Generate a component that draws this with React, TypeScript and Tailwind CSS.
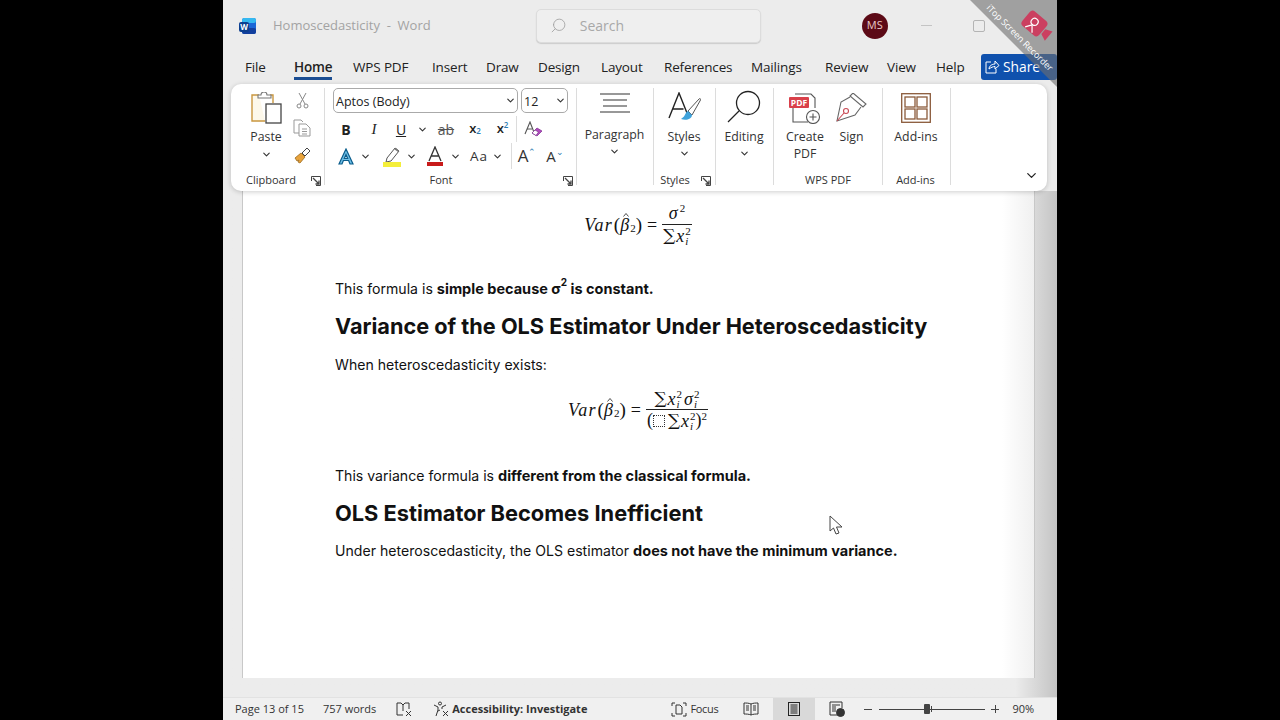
import { ChevronDown, Search } from 'lucide-react'
import type { ReactNode } from 'react'

const ui = "font-['Open_Sans','Noto_Sans',sans-serif]"
const doc = "font-['Inter',sans-serif]"

const tabs = [
  { name: 'File', w: 'w-[49px]' },
  { name: 'Home', w: 'w-[59px]', on: true },
  { name: 'WPS PDF', w: 'w-[79px]' },
  { name: 'Insert', w: 'w-[54px]' },
  { name: 'Draw', w: 'w-[52px]' },
  { name: 'Design', w: 'w-[63px]' },
  { name: 'Layout', w: 'w-[63px]' },
  { name: 'References', w: 'w-[87px]' },
  { name: 'Mailings', w: 'w-[74px]' },
  { name: 'Review', w: 'w-[62px]' },
  { name: 'View', w: 'w-[49px]' },
  { name: 'Help', w: 'w-[45px]' },
]

function Chev({ cls = '' }: { cls?: string }) {
  return <ChevronDown size={11} strokeWidth={2.400} className={`text-[#333] shrink-0 ${cls}`} />
}

function Launcher({ cls = '' }: { cls?: string }) {
  return (
    <svg width="10" height="10" viewBox="0 0 10 10" className={cls} fill="none" stroke="#444" strokeWidth="1">
      <path d="M.5 5V.5h9v9H5" />
      <path d="M2 2l6 6M8 4.5V8H4.5" strokeWidth="1.3" />
    </svg>
  )
}

function Group({ w, label, children, labelCls = '' }: { w: string; label?: string; children: ReactNode; labelCls?: string }) {
  return (
    <div className={`${w} relative shrink-0 h-full flex flex-col`}>
      <div className="flex-1 min-h-0">{children}</div>
      {label && <div className={`h-[19px] mb-[2px] text-[11px] leading-[19px] text-center text-[#333] ${labelCls}`}>{label}</div>}
      <div className="absolute right-0 top-[4px] bottom-[6px] w-px bg-[#dcdcdc]" />
    </div>
  )
}

function Cell({ w, cls = '', children }: { w: string; cls?: string; children: ReactNode }) {
  return <div className={`${w} h-full flex items-center justify-center shrink-0 ${cls}`}>{children}</div>
}

function WordIcon() {
  return (
    <svg width="17" height="18" viewBox="0 0 17 18">
      <rect x="3" y="1" width="14" height="16" rx="2.5" fill="#1a66d6" />
      <rect x="3" y="1" width="14" height="5" rx="2" fill="#35b8f0" />
      <rect x="3" y="11" width="14" height="6" rx="2" fill="#123f9e" />
      <rect x="0" y="5" width="10" height="10" rx="2" fill="#0d3f8f" />
      <text x="5" y="13" textAnchor="middle" fontSize="8" fontWeight="700" fill="#fff" fontFamily="Open Sans">W</text>
    </svg>
  )
}

function PasteIcon() {
  return (
    <svg width="32" height="33" viewBox="0 0 32 33" fill="none">
      <path d="M9 3H2v26h13" stroke="#c9973f" strokeWidth="1.4" fill="#fdf8ea" />
      <path d="M20 3h3v8" stroke="#c9973f" strokeWidth="1.4" />
      <path d="M8 6V3h3a3 3 0 0 1 6 0h4v3z" fill="#fff" stroke="#777" strokeWidth="1.1" />
      <rect x="16" y="12" width="15" height="19" fill="#fff" stroke="#444" strokeWidth="1.3" />
    </svg>
  )
}

function CutIcon() {
  return (
    <svg width="13" height="17" viewBox="0 0 13 17" fill="none" stroke="#888" strokeWidth="1">
      <path d="M3 1l6 11M10 1L4 12" />
      <circle cx="3" cy="14" r="2" />
      <circle cx="10" cy="14" r="2" />
    </svg>
  )
}

function CopyIcon() {
  return (
    <svg width="18" height="18" viewBox="0 0 18 18" fill="none" stroke="#999" strokeWidth="1">
      <path d="M6 14H1V1h7l2 2" />
      <path d="M6 5h7l4 4v8H6z" />
      <path d="M9 10h5M9 12.5h5M9 15h5" />
    </svg>
  )
}

function BrushIcon() {
  return (
    <svg width="17" height="17" viewBox="0 0 17 17" fill="none">
      <path d="M1 11l6-5 4 4-5 6-2-1 1-2-2 1z" fill="#e8a33c" stroke="#9a6a1e" strokeWidth=".8" />
      <path d="M8 6l5-5 3 3-5 5z" fill="#fff" stroke="#444" strokeWidth="1" />
    </svg>
  )
}

function BigA({ color, bar }: { color: string; bar: string }) {
  return (
    <svg width="20" height="21" viewBox="0 0 20 21" fill="none">
      <path d="M4 15L10 1l6 14M6 10h8" stroke={color} strokeWidth="1.3" />
      <rect x="2" y="16" width="16" height="4" fill={bar} />
    </svg>
  )
}

function Highlighter() {
  return (
    <svg width="20" height="21" viewBox="0 0 20 21" fill="none">
      <path d="M5 12l8-10 4 3-8 10-5 1z" fill="#fff" stroke="#555" strokeWidth="1" />
      <path d="M12 3l4 3 1-1-3-3z" fill="#777" />
      <rect x="1" y="16" width="18" height="5" fill="#f4ee3a" />
    </svg>
  )
}

function TextEffects() {
  return (
    <svg width="18" height="17" viewBox="0 0 18 17">
      <path d="M2 16L9 1l7 15h-3l-1.4-3.500H6.400L5 16zM7.300 10.500h3.400L9 6.500z" fill="#6fc0e8" stroke="#0b5d8c" strokeWidth="1.200" />
    </svg>
  )
}

function ClearFormat() {
  return (
    <svg width="19" height="17" viewBox="0 0 19 17" fill="none">
      <path d="M1 13L6 1l3.500 9" stroke="#555" strokeWidth="1.100" />
      <path d="M3 8h5" stroke="#555" strokeWidth="1" />
      <path d="M8 12l5-5 5 3-5 5z" fill="#b24ac0" stroke="#7b2c8c" strokeWidth=".7" />
      <path d="M8 12l3-3 3.500 2-2.500 3.500z" fill="#fff" stroke="#7b2c8c" strokeWidth=".7" />
    </svg>
  )
}

function ParagraphIcon() {
  return (
    <svg width="30" height="25" viewBox="0 0 30 25" stroke="#333" strokeWidth="1.200">
      <path d="M0 1h30M3 7h24M3 13h24M0 19h30" />
    </svg>
  )
}

function StylesIcon() {
  return (
    <svg width="33" height="31" viewBox="0 0 33 31" fill="none">
      <path d="M1 26L11 1l8 20M4.500 17h11" stroke="#222" strokeWidth="1.400" />
      <path d="M20 19L31 7c1-1 2 0 1.500 1L24 23z" fill="#fff" stroke="#555" strokeWidth="1" />
      <path d="M20 19c-3 1-2 5-7 8 5 2 11 0 11-4z" fill="#3fa3dc" />
    </svg>
  )
}

function EditingIcon() {
  return (
    <svg width="34" height="33" viewBox="0 0 34 33" fill="none" stroke="#222" strokeWidth="1.300">
      <circle cx="21" cy="13" r="11.500" />
      <path d="M12 21L1 32" />
    </svg>
  )
}

function PdfIcon() {
  return (
    <svg width="32" height="31" viewBox="0 0 32 31" fill="none">
      <path d="M4 12v17h15M6 1h16l4 4v10" stroke="#555" strokeWidth="1.100" />
      <rect x="0" y="4" width="20" height="11" rx="1" fill="#d9404a" />
      <text x="10" y="13" textAnchor="middle" fontSize="8.500" fontWeight="700" fill="#fff" fontFamily="Open Sans">PDF</text>
      <circle cx="24" cy="24" r="6.500" fill="#fff" stroke="#555" strokeWidth="1.100" />
      <path d="M24 20.500v7M20.500 24h7" stroke="#555" strokeWidth="1.100" />
    </svg>
  )
}

function SignIcon() {
  return (
    <svg width="31" height="30" viewBox="0 0 31 30" fill="none" stroke="#666" strokeWidth="1.100">
      <path d="M17 0l13 11-3 3-13-11z" />
      <path d="M14 4L5 9 1 28l18-6 6-8" />
      <path d="M1 28l7-8" stroke="#c94a55" />
      <circle cx="10" cy="18" r="2.500" stroke="#c94a55" />
    </svg>
  )
}

function AddinsIcon() {
  return (
    <svg width="30" height="30" viewBox="0 0 30 30" fill="none" stroke="#8a5a3a" strokeWidth="1.300">
      <rect x=".7" y=".7" width="28.600" height="28.600" />
      <rect x="4" y="4" width="10" height="10" />
      <rect x="16" y="4" width="10" height="10" />
      <rect x="4" y="16" width="10" height="10" />
      <rect x="16" y="16" width="10" height="10" />
    </svg>
  )
}

function Sup({ children }: { children: ReactNode }) {
  return <span className="flex flex-col text-[11px] leading-[10px] ml-px not-italic">{children}</span>
}

function Fx({ children, cls = '' }: { children: ReactNode; cls?: string }) {
  return <span className={`font-['Liberation_Serif',serif] italic ${cls}`}>{children}</span>
}

function VarHat() {
  return (
    <span className="flex items-center text-[18px] whitespace-nowrap">
      <Fx cls="tracking-[1.200px]">Var</Fx>
      <span className="text-[19px] ml-px">(</span>
      <span className="relative">
        <Fx>β</Fx>
        <svg width="6" height="4" viewBox="0 0 6 4" fill="none" stroke="#222" strokeWidth=".8" className="absolute left-[3px] top-[1px]">
          <path d="M.5 3.500L3 .5l2.500 3" />
        </svg>
      </span>
      <span className="text-[11px] mt-[7px] ml-px">2</span>
      <span className="text-[19px]">)</span>
      <span className="mx-[5px]">=</span>
    </span>
  )
}

function SumX() {
  return (
    <span className="flex items-center">
      <span className="font-['DejaVu_Serif',serif] text-[17px] leading-none">∑</span>
      <Fx cls="text-[18px] leading-none ml-px">x</Fx>
      <Sup>
        <span>2</span>
        <Fx>i</Fx>
      </Sup>
    </span>
  )
}

function Formula({ children }: { children: ReactNode }) {
  return <div className="flex justify-center items-center h-[50px] text-[#111] font-['Liberation_Serif',serif]">{children}</div>
}

function Frac({ top, bottom }: { top: ReactNode; bottom: ReactNode }) {
  return (
    <span className="flex flex-col items-center">
      <span className="flex items-center justify-center h-[20px] px-px">{top}</span>
      <span className="w-full h-px bg-[#222]" />
      <span className="flex items-center justify-center h-[22px] px-px">{bottom}</span>
    </span>
  )
}

function Para({ cls, children }: { cls: string; children: ReactNode }) {
  return <p className={`${cls} text-[14.100px] leading-[24px] text-[#111] whitespace-nowrap`}>{children}</p>
}

function Bold({ children }: { children: ReactNode }) {
  return <b className="text-[14.500px]">{children}</b>
}

function Heading({ cls, children }: { cls: string; children: ReactNode }) {
  return <h2 className={`${cls} leading-[32px] font-bold text-[#111] whitespace-nowrap`}>{children}</h2>
}

export default function App() {
  return (
    <div className={`${ui} w-[1280px] h-[720px] bg-black flex justify-center overflow-hidden`}>
      <div className="w-[834px] h-full bg-[#ececec] flex flex-col relative overflow-hidden">
        {/* title bar */}
        <div className="h-[52px] shrink-0 flex items-center pb-[1px]">
          <span className="ml-[16px] flex"><WordIcon /></span>
          <span className="ml-[17px] text-[13px] text-[#a3a3a3] whitespace-nowrap">Homoscedasticity&nbsp; -&nbsp; Word</span>
          <div className="ml-[105px] w-[225px] h-[34px] bg-[#efefef] border border-[#dcdcdc] rounded-[5px] shadow-[0_1px_1px_#ccc] flex items-center">
            <Search size={17} strokeWidth={1.200} className="ml-[13px] text-[#a0a0a0] -scale-x-100" />
            <span className="ml-[13px] text-[14px] text-[#a8a8a8]">Search</span>
          </div>
          <div className="ml-[101px] w-[26px] h-[26px] rounded-full bg-[#5c0a16] text-[#e8c8c8] text-[11px] flex items-center justify-center">MS</div>
          <div className="ml-[33px] w-[11px] h-px bg-[#c4c4c4]" />
          <div className="ml-[41px] w-[12px] h-[12px] rounded-[2px] border border-[#b4b4b4]" />
        </div>

        {/* tabs */}
        <div className="h-[32px] shrink-0 flex items-start pl-[22px] text-[13.500px] tracking-[-0.150px] text-[#222]">
          {tabs.map((t) => (
            <div key={t.name} className={`${t.w} shrink-0`}>
              <span className={`inline-block h-[28px] leading-[31px] whitespace-nowrap ${t.on ? 'font-semibold border-b-[3px] border-[#1b4d92]' : ''}`}>{t.name}</span>
            </div>
          ))}
          <div className="ml-auto mt-[2px] w-[76px] h-[26px] rounded-[3px] bg-[#0f51ad] text-white flex items-center tracking-normal">
            <svg width="15" height="14" viewBox="0 0 15 14" fill="none" stroke="#fff" strokeWidth="1" className="ml-[4px]">
              <path d="M6 2H1v11h10V9" />
              <path d="M4 9c0-3 3-5 6-5V1l4 4.500L10 9V6.500C8 6.500 6 7.500 4 9z" />
            </svg>
            <span className="ml-[3px] text-[13.800px]">Share</span>
          </div>
        </div>

        {/* ribbon */}
        <div className="absolute z-10 left-[8px] top-[84px] w-[816px] h-[107px] bg-white rounded-[10px] shadow-[0_1px_5px_rgba(0,0,0,0.2)] flex text-[#333]">
          <Group w="w-[94px]" label="Clipboard" labelCls="text-left pl-[15px]">
            <div className="flex h-full">
              <div className="w-[70px] flex flex-col items-center pt-[8px]">
                <PasteIcon />
                <span className="text-[12.300px] mt-[3px]">Paste</span>
                <Chev cls="mt-[3px]" />
              </div>
              <div className="flex flex-col items-center pt-[8px] gap-[10px] -ml-[1px] w-[4px]">
                <CutIcon />
                <CopyIcon />
                <BrushIcon />
              </div>
            </div>
            <Launcher cls="absolute right-[4px] bottom-[5px]" />
          </Group>

          <Group w="w-[252px]" label="Font" labelCls="pr-[20px]">
            <div className="pl-[8px] pt-[4px]">
              <div className="flex gap-[3px] h-[25px]">
                <div className="w-[185px] rounded-[5px] border border-[#aaa] flex items-center justify-between pl-[2px] pr-[1px] text-[12.500px] leading-[25px] text-[#222]">
                  <span className="mt-[2px]">Aptos (Body)</span><Chev />
                </div>
                <div className="w-[47px] rounded-[5px] border border-[#aaa] flex items-center justify-between pl-[2px] pr-[1px] text-[12.500px] leading-[25px] text-[#222]">
                  <span className="mt-[2px]">12</span><Chev />
                </div>
              </div>
              <div className="flex h-[26px] mt-[3px] text-[#222]">
                <Cell w="w-[26px]" cls="font-bold text-[14px]">B</Cell>
                <Cell w="w-[30px]" cls="italic text-[15px] font-['Liberation_Serif',serif]">I</Cell>
                <Cell w="w-[24px]" cls="underline text-[14px]">U</Cell>
                <Cell w="w-[18px]"><Chev /></Cell>
                <Cell w="w-[30px]" cls="line-through text-[14px] text-[#555]">ab</Cell>
                <Cell w="w-[28px]" cls="font-semibold text-[13px]">x<sub className="text-[8px] text-[#2a7ab0]">2</sub></Cell>
                <Cell w="w-[28px]" cls="font-semibold text-[13px] border-r border-[#dcdcdc]">x<sup className="text-[8px] text-[#2a7ab0]">2</sup></Cell>
                <Cell w="w-[32px]"><ClearFormat /></Cell>
              </div>
              <div className="flex h-[26px] mt-[1px] text-[#333]">
                <Cell w="w-[26px]"><TextEffects /></Cell>
                <Cell w="w-[12px]"><Chev /></Cell>
                <Cell w="w-[28px]" cls="ml-[7px]"><Highlighter /></Cell>
                <Cell w="w-[10px]"><Chev /></Cell>
                <Cell w="w-[24px]" cls="ml-[7px]"><BigA color="#333" bar="#c81a1a" /></Cell>
                <Cell w="w-[10px]" cls="ml-[3px]"><Chev /></Cell>
                <Cell w="w-[24px]" cls="ml-[7px] text-[13.500px] tracking-[1px]">Aa</Cell>
                <Cell w="w-[10px]" cls="ml-[1px]"><Chev /></Cell>
                <div className="ml-[9px] w-px h-full bg-[#dcdcdc]" />
                <Cell w="w-[24px]" cls="ml-[3px] text-[17px]">A<span className="text-[9px] text-[#2a7ab0] -mt-[8px]">⌃</span></Cell>
                <Cell w="w-[24px]" cls="ml-[4px] text-[15px]">A<span className="text-[9px] text-[#2a7ab0] -mt-[8px]">⌄</span></Cell>
              </div>
            </div>
            <Launcher cls="absolute right-[4px] bottom-[5px]" />
          </Group>

          <Group w="w-[77px]">
            <div className="flex flex-col items-center pt-[9px] pr-[2px]">
              <ParagraphIcon />
              <span className="text-[12.300px] mt-[8px]">Paragraph</span>
              <Chev cls="mt-[2px]" />
            </div>
          </Group>

          <Group w="w-[62px]" label="Styles" labelCls="pr-[20px]">
            <div className="flex flex-col items-center pt-[8px] pr-[2px]">
              <StylesIcon />
              <span className="text-[12.300px] mt-[5px]">Styles</span>
              <Chev cls="mt-[2px]" />
            </div>
            <Launcher cls="absolute right-[5px] bottom-[5px]" />
          </Group>

          <Group w="w-[58px]">
            <div className="flex flex-col items-center pt-[6px] pr-[2px]">
              <EditingIcon />
              <span className="text-[12.300px] mt-[5px]">Editing</span>
              <Chev cls="mt-[2px]" />
            </div>
          </Group>

          <Group w="w-[109px]" label="WPS PDF" labelCls="pr-[1px]">
            <div className="flex pt-[9px] pl-[13px] text-[12.300px] leading-[17px]">
              <div className="w-[36px] flex flex-col items-center text-center">
                <PdfIcon />
                <span className="mt-[4px]">Create PDF</span>
              </div>
              <div className="ml-[13px] w-[31px] flex flex-col items-center">
                <SignIcon />
                <span className="mt-[5px]">Sign</span>
              </div>
            </div>
          </Group>

          <Group w="w-[68px]" label="Add-ins" labelCls="pr-[3px]">
            <div className="flex flex-col items-center pt-[9px] pr-[2px]">
              <AddinsIcon />
              <span className="text-[12.300px] mt-[5px]">Add-ins</span>
            </div>
          </Group>

          <ChevronDown size={15} strokeWidth={2} className="absolute right-[8px] bottom-[8px] text-[#222]" />
        </div>

        {/* document */}
        <div className="flex-1 min-h-0 relative mt-[107px] bg-gradient-to-r from-[#ececec] from-[95%] to-[#c4c4c4]">
          <div className={`${doc} ml-[19px] w-[793px] h-[487px] bg-gradient-to-r from-white from-[96%] to-[#f0f0f0] border-x border-[#c8c8c8] pl-[92px]`}>
            <div className="w-[606px] pt-[9px]">
              <Formula>
                <VarHat />
                <Frac
                  top={<span className="flex"><Fx cls="text-[18px]">σ</Fx><span className="text-[11px] ml-[2px]">2</span></span>}
                  bottom={<SumX />}
                />
              </Formula>
              <Para cls="mt-[27px]">
                This formula is <Bold>simple because σ<sup className="text-[10px] [top:-0.8em]">2</sup> is constant.</Bold>
              </Para>
              <Heading cls="mt-[9px] text-[21.700px]">Variance of the OLS Estimator Under Heteroscedasticity</Heading>
              <Para cls="mt-[11px]">When heteroscedasticity exists:</Para>
              <div className="mt-[8px]">
                <Formula>
                  <VarHat />
                  <Frac
                    top={
                      <span className="flex items-center">
                        <SumX />
                        <Fx cls="text-[18px] leading-none ml-[2px]">σ</Fx>
                        <Sup>
                          <span>2</span>
                          <Fx>i</Fx>
                        </Sup>
                      </span>
                    }
                    bottom={
                      <span className="flex items-center">
                        <span className="text-[18px]">(</span>
                        <span className="w-[12px] h-[12px] border border-dotted border-[#333] mr-[3px]" />
                        <SumX />
                        <span className="text-[18px]">)</span>
                        <span className="text-[11px] -mt-[8px]">2</span>
                      </span>
                    }
                  />
                </Formula>
              </div>
              <Para cls="mt-[29px]">
                This variance formula is <Bold>different from the classical formula.</Bold>
              </Para>
              <Heading cls="mt-[9px] text-[21.800px]">OLS Estimator Becomes Inefficient</Heading>
              <Para cls="mt-[10px]">
                Under heteroscedasticity, the OLS estimator <Bold>does not have the minimum variance.</Bold>
              </Para>
            </div>
          </div>
        </div>

        {/* status bar */}
        <div className="h-[23px] shrink-0 bg-[#f0f0f0] border-t border-[#e2e2e2] flex items-center text-[11px] text-[#333]">
          <span className="ml-[12px] whitespace-nowrap">Page 13 of 15</span>
          <span className="ml-[19px] whitespace-nowrap">757 words</span>
          <svg width="16" height="15" viewBox="0 0 16 15" fill="none" stroke="#333" strokeWidth="1" className="ml-[20px]">
            <path d="M7 13H1V1h4l2 2 2-2h4v6M7 3v6M10 9l5 5M15 9l-5 5" />
          </svg>
          <svg width="16" height="16" viewBox="0 0 16 16" fill="none" stroke="#333" strokeWidth="1" className="ml-[21px]">
            <circle cx="7" cy="2.500" r="1.500" />
            <path d="M1 4l4 2v3l-2 6M13 4L9 6v2M5 10l2-1M10 10l5 5M15 10l-5 5" />
          </svg>
          <span className="ml-[3px] font-bold whitespace-nowrap">Accessibility: Investigate</span>
          <svg width="16" height="15" viewBox="0 0 16 15" fill="none" stroke="#333" strokeWidth="1" className="ml-[84px]">
            <path d="M1 4V1h3M12 1h3v3M1 11v3h3M12 14h3v-3M5 3h4l2 2v7H5z" />
          </svg>
          <span className="ml-[3px] tracking-[-0.300px]">Focus</span>
          <svg width="16" height="14" viewBox="0 0 16 14" fill="none" stroke="#333" strokeWidth="1" className="ml-[25px]">
            <path d="M8 2C6 1 3 1 1 1v11c2 0 5 0 7 1 2-1 5-1 7-1V1c-2 0-5 0-7 1zM8 2v11M3 4h3M3 6h3M3 8h3M10 4h3M10 6h3M10 8h3" />
          </svg>
          <div className="ml-[14px] w-[42px] h-full bg-[#d9d9d9] flex items-center justify-center">
            <svg width="12" height="14" viewBox="0 0 12 14" fill="none" stroke="#222" strokeWidth="1">
              <rect x=".5" y=".5" width="11" height="13" />
              <path d="M2.500 3h7M2.500 5h7M2.500 7h7M2.500 9h7M2.500 11h7" />
            </svg>
          </div>
          <svg width="16" height="16" viewBox="0 0 16 16" fill="none" stroke="#333" strokeWidth="1" className="ml-[14px]">
            <path d="M8 14H1V1h12v6M3 4h8M3 6h4M3 8h4M3 10h4" />
            <circle cx="11.500" cy="11.500" r="4" fill="#333" />
          </svg>
          <span className="ml-[19px] w-[8px] h-px bg-[#444]" />
          <div className="ml-[7px] w-[106px] h-[10px] relative flex items-center">
            <div className="w-full h-px bg-[#444]" />
            <div className="absolute left-[45px] top-0 w-[6px] h-[10px] bg-[#444] rounded-[1px]" />
            <div className="absolute left-[52px] top-[2px] w-px h-[6px] bg-[#444]" />
          </div>
          <span className="ml-[6px] w-[8px] h-[8px] relative flex items-center justify-center">
            <span className="w-[8px] h-px bg-[#444]" />
            <span className="absolute w-px h-[8px] bg-[#444]" />
          </span>
          <span className="ml-[13px]">90%</span>
        </div>

        {/* mouse cursor */}
        <svg width="15" height="20" viewBox="0 0 15 20" className="absolute left-[606px] top-[515px]" fill="#fff" stroke="#444" strokeWidth="1">
          <path d="M1 1v15l3.500-3 2.500 6 3-1-2.500-6H13z" />
        </svg>

        {/* recorder watermark */}
        <svg width="90" height="87" viewBox="0 0 90 87" className="absolute right-0 top-0 z-20">
          <path d="M3 0h87v87z" fill="#6e6e6e" fillOpacity="0.6" />
          <g transform="rotate(40 68 26)">
            <rect x="55" y="15" width="22" height="19" rx="4" fill="#cb3f60" />
            <path d="M78 22l7-3v12l-7-3z" fill="#cb3f60" />
            <circle cx="65" cy="23" r="3.500" fill="none" stroke="#fff" strokeWidth="1.200" />
            <path d="M61 33l4-6 5 6" fill="none" stroke="#fff" strokeWidth="1.200" />
          </g>
        </svg>
        <span className="absolute z-30 left-[747px] top-[31px] w-[100px] text-center rotate-45 text-[9px] text-white whitespace-nowrap">iTop Screen Recorder</span>
      </div>
    </div>
  )
}
